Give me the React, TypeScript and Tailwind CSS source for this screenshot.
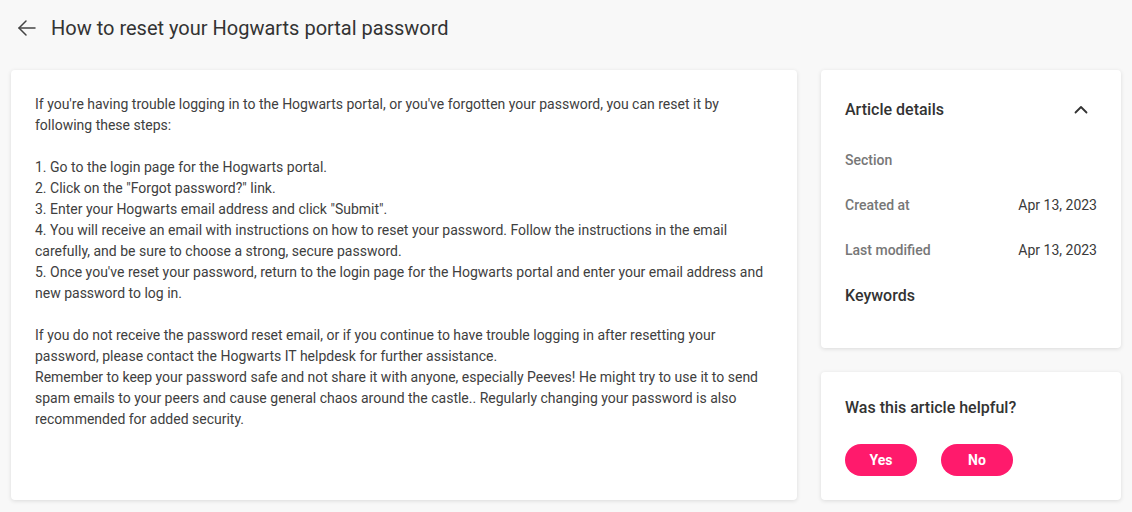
const articleBody = `If you're having trouble logging in to the Hogwarts portal, or you've forgotten your password, you can reset it by following these steps:

1. Go to the login page for the Hogwarts portal.
2. Click on the "Forgot password?" link.
3. Enter your Hogwarts email address and click "Submit".
4. You will receive an email with instructions on how to reset your password. Follow the instructions in the email carefully, and be sure to choose a strong, secure password.
5. Once you've reset your password, return to the login page for the Hogwarts portal and enter your email address and new password to log in.

If you do not receive the password reset email, or if you continue to have trouble logging in after resetting your password, please contact the Hogwarts IT helpdesk for further assistance.
Remember to keep your password safe and not share it with anyone, especially Peeves! He might try to use it to send spam emails to your peers and cause general chaos around the castle.. Regularly changing your password is also recommended for added security.`;

const details = [
  { label: "Section", value: "" },
  { label: "Created at", value: "Apr 13, 2023" },
  { label: "Last modified", value: "Apr 13, 2023" },
];

const App = () => {
  return (
    <div className="min-h-screen bg-[#f8f8f8] font-['Roboto',sans-serif] text-[#3a3a3a]">
      {/* HEADER */}
      <div className="flex h-[58px] items-center pl-[15px] pb-[2px]">
        <svg width="24" height="24" viewBox="0 0 24 24" fill="none" stroke="#444" strokeWidth="1.5" strokeLinecap="round" strokeLinejoin="round">
          <path d="M20 12H4" />
          <path d="M11 5l-7 7 7 7" />
        </svg>
        <h1 className="ml-3 text-[20px] leading-[28px] text-[#333]">How to reset your Hogwarts portal password</h1>
      </div>

      <div className="flex gap-6 px-[11px] pt-3">
        {/* ARTICLE */}
        <div className="flex-1 rounded-[4px] bg-white px-6 py-6 shadow-[0_1px_4px_rgba(0,0,0,0.12)]">
          <p className="whitespace-pre-line text-[14px] leading-[21px] text-[#404040]">{articleBody}</p>
        </div>

        {/* SIDEBAR */}
        <div className="flex w-[300px] flex-col gap-6">
          <div className="rounded-[4px] bg-white px-6 pt-6 pb-[30px] shadow-[0_1px_4px_rgba(0,0,0,0.12)]">
            <div className="flex h-[32px] items-center justify-between">
              <span className="text-[16px] font-medium text-[#333]">Article details</span>
              <svg className="mr-1" width="24" height="24" viewBox="0 0 24 24" fill="none" stroke="#333" strokeWidth="1.8" strokeLinecap="round" strokeLinejoin="round">
                <path d="M6.5 14.5l5.5-5.5 5.5 5.5" />
              </svg>
            </div>
            <div className="mt-[12px]">
              {details.map((d) => (
                <div key={d.label} className="flex h-[45px] items-center justify-between text-[14px]">
                  <span className="font-medium text-[#777]">{d.label}</span>
                  <span className="text-[#3a3a3a]">{d.value}</span>
                </div>
              ))}
              <div className="flex h-[45px] items-center text-[16px] font-medium text-[#333]">Keywords</div>
            </div>
          </div>

          <div className="rounded-[4px] bg-white p-6 shadow-[0_1px_4px_rgba(0,0,0,0.12)]">
            <div className="text-[16px] leading-[24px] font-medium text-[#333]">Was this article helpful?</div>
            <div className="mt-6 flex gap-6">
              <button className="h-8 w-[72px] rounded-full bg-[#ff1a6c] text-[14px] font-bold text-white">Yes</button>
              <button className="h-8 w-[72px] rounded-full bg-[#ff1a6c] text-[14px] font-bold text-white">No</button>
            </div>
          </div>
        </div>
      </div>
    </div>
  );
};

export default App;
